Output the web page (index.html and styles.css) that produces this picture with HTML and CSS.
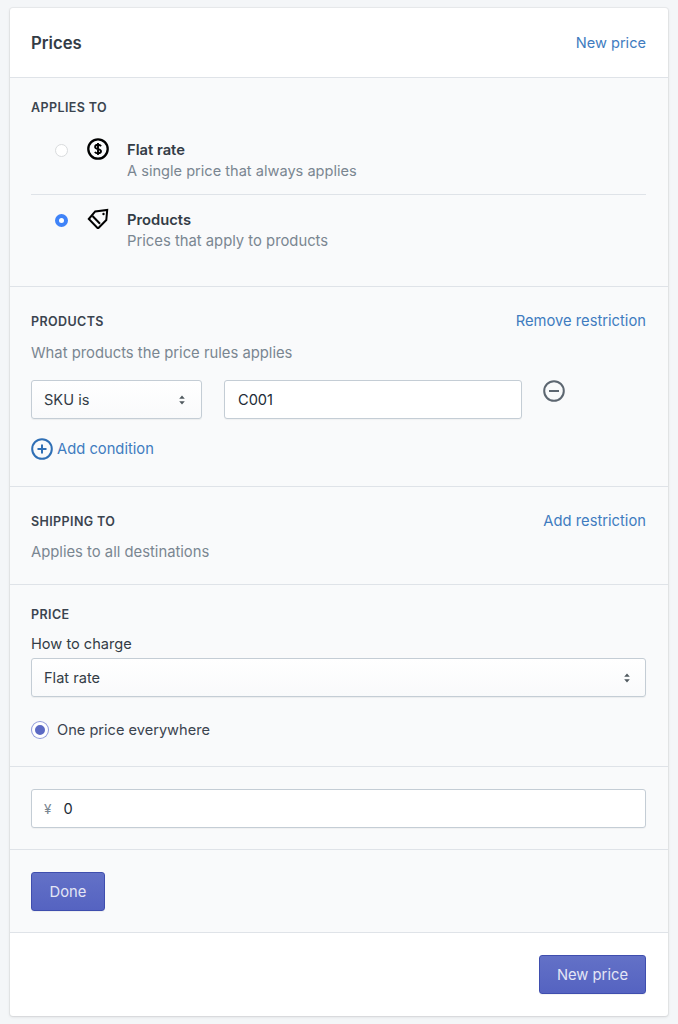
FILE: index.html
```html
<!DOCTYPE html>
<html lang="en">
<head>
<meta charset="utf-8">
<title>Prices</title>
<link rel="stylesheet" href="styles.css">
</head>
<body>
<main class="card">
  <header class="card-head">
    <h2 class="card-title">Prices</h2>
    <a class="link" href="#">New price</a>
  </header>

  <section class="sec sec-applies">
    <h3 class="label">Applies to</h3>
    <div class="option option-first">
      <span class="radio-plain"></span>
      <svg class="opt-icon" viewBox="0 0 22 22" width="22" height="22" fill="none" stroke="#000" stroke-width="2.300">
        <circle cx="11" cy="11" r="9.700"/>
        <path d="M14 8.200c-.5-.9-1.500-1.400-3-1.400-1.700 0-2.900.8-2.900 2.100 0 2.900 5.900 1.400 5.900 4.300 0 1.300-1.200 2.100-3 2.100-1.600 0-2.600-.5-3.100-1.400M11 5v12" stroke-width="1.900"/>
      </svg>
      <div class="opt-text">
        <div class="opt-title">Flat rate</div>
        <div class="muted">A single price that always applies</div>
      </div>
    </div>
    <div class="option">
      <span class="radio-blue"></span>
      <svg class="opt-icon" viewBox="0 0 22 22" width="22" height="22" fill="none" stroke="#000" stroke-width="2" stroke-linejoin="miter">
        <path d="M1.800 12 8.200 4.400l12-1.400-.9 10L11 21.500z"/>
        <path d="M5.500 9 13 16.800"/>
        <circle cx="16.500" cy="7" r="1.200" fill="#000" stroke="none"/>
      </svg>
      <div class="opt-text">
        <div class="opt-title">Products</div>
        <div class="muted muted-wide">Prices that apply to products</div>
      </div>
    </div>
  </section>

  <section class="sec sec-products">
    <div class="sec-head">
      <h3 class="label">Products</h3>
      <a class="link" href="#">Remove restriction</a>
    </div>
    <p class="muted muted-wide sec-note sec-note-low">What products the price rules applies</p>
    <div class="condition">
      <div class="select select-sku">
        <span>SKU is</span>
        <svg class="caret" viewBox="0 0 8 12" width="8" height="12" fill="#50595f"><path d="M4 1.500 6.800 4.800H1.200zM4 10.500 1.200 7.200h5.600z"/></svg>
      </div>
      <div class="input input-sku">C001</div>
      <svg class="minus" viewBox="0 0 22 22" width="22" height="22" fill="none" stroke="#5c6670" stroke-width="2">
        <circle cx="11" cy="11" r="9.800"/>
        <path d="M6 11h10"/>
      </svg>
    </div>
    <a class="add" href="#">
      <svg viewBox="0 0 22 22" width="22" height="22" fill="none" stroke="#2f6fb5" stroke-width="2">
        <circle cx="11" cy="11" r="9.800"/>
        <path d="M11 6.500v9M6.500 11h9"/>
      </svg>
      <span>Add condition</span>
    </a>
  </section>

  <section class="sec sec-shipping">
    <div class="sec-head">
      <h3 class="label">Shipping to</h3>
      <a class="link" href="#">Add restriction</a>
    </div>
    <p class="muted muted-wide sec-note">Applies to all destinations</p>
  </section>

  <section class="sec sec-price">
    <h3 class="label">Price</h3>
    <div class="field-label">How to charge</div>
    <div class="select">
      <span>Flat rate</span>
      <svg class="caret" viewBox="0 0 8 12" width="8" height="12" fill="#50595f"><path d="M4 1.500 6.800 4.800H1.200zM4 10.500 1.200 7.200h5.600z"/></svg>
    </div>
    <div class="radio-row">
      <span class="radio-indigo"></span>
      <span>One price everywhere</span>
    </div>
  </section>

  <section class="sec sec-amount">
    <div class="input input-money"><span class="currency">¥</span><span>0</span></div>
  </section>

  <section class="sec sec-done">
    <button class="btn" type="button">Done</button>
  </section>

  <footer class="card-foot">
    <button class="btn" type="button">New price</button>
  </footer>
</main>
</body>
</html>
```

FILE: styles.css
```css
* { box-sizing: border-box; }
html, body { margin: 0; padding: 0; }
body {
  background: #f4f6f8;
  padding: 8px 10px;
  font-family: Inter, "Liberation Sans", sans-serif;
  font-size: 14.6px;
  line-height: 20px;
  color: #212b36;
  height: 1024px;
  overflow: hidden;
}
.card {
  height: 1008px;
  background: #fff;
  border-radius: 3px;
  box-shadow: 0 0 0 1px rgba(63,63,68,.05), 0 1px 3px rgba(63,63,68,.15);
  display: flex;
  flex-direction: column;
}
.card-head {
  height: 70px;
  flex: none;
  padding: 0 22px 0 21px;
  display: flex;
  align-items: center;
  justify-content: space-between;
  border-bottom: 1px solid #dfe3e8;
}
.card-title { margin: 0; font-size: 16.700px; font-weight: 600; color: #333c46; }
.link { color: #3f7cc0; text-decoration: none; font-size: 14.750px; }
.card-head .link { font-size: 14.600px; }
.sec {
  flex: none;
  background: #f9fafb;
  padding: 0 22px 0 21px;
  border-bottom: 1px solid #dfe3e8;
}
.label {
  margin: 0;
  font-size: 12.500px;
  line-height: 16px;
  font-weight: 600;
  letter-spacing: .4px;
  text-transform: uppercase;
  color: #3b444f;
}
.muted { color: #7a8691; }
.muted-wide { font-size: 14.800px; }
.sec-applies { height: 209px; padding-top: 22px; }
.option {
  display: flex;
  align-items: flex-start;
  padding: 14px 0 0 24px;
}
.option-first { height: 79px; border-bottom: 1px solid #dfe3e8; padding-top: 24px; }
.option-first .opt-text { margin-top: -1px; }
.radio-plain, .radio-blue {
  width: 13px;
  height: 13px;
  border-radius: 50%;
  flex: none;
}
.radio-plain { background: #fff; border: 1px solid #d9dbdd; margin-top: 4px; }
.radio-blue { background: #fff; border: 4px solid #3f83f8; margin-top: 5px; }
.opt-icon { flex: none; margin: -2px 18px 0 19px; }
.opt-title { font-weight: 600; font-size: 14.750px; line-height: 22px; color: #333c46; }
.sec-products { height: 200px; padding-top: 24px; }
.sec-head { display: flex; justify-content: space-between; align-items: flex-start; }
.sec-head .label { margin-top: 3px; }
.sec-note { margin: 11px 0 0; }
.sec-note-low { margin-top: 12px; }
.condition { display: flex; align-items: flex-start; margin-top: 17px; }
.select, .input {
  height: 39px;
  border: 1px solid #c4cdd5;
  border-radius: 3px;
  display: flex;
  align-items: center;
  padding: 0 12px;
}
.select {
  justify-content: space-between;
  background: linear-gradient(#fff, #f9fafb);
  box-shadow: 0 1px 1px rgba(22,29,37,.06);
  color: #333c46;
  padding-right: 14px;
}
.input { background: #fff; box-shadow: 0 1px 1px rgba(22,29,37,.04); color: #212b36; }
.select-sku { width: 171px; flex: none; padding-right: 15px; }
.input-sku { width: 297.500px; flex: none; margin-left: 22px; padding-left: 13px; }
.minus { flex: none; margin-left: 21.500px; }
.add {
  display: flex;
  align-items: center;
  gap: 4px;
  margin-top: 19px;
  color: #3f7cc0;
  text-decoration: none;
  font-size: 14.750px;
}
.sec-shipping { height: 98px; padding-top: 24px; }
.sec-price { height: 182px; padding-top: 22px; }
.field-label { margin-top: 11px; height: 24px; color: #333c46; }
.radio-row { display: flex; align-items: center; gap: 9px; margin-top: 23px; color: #3b444f; }
.radio-indigo {
  width: 16px;
  height: 16px;
  border-radius: 50%;
  background: #5c6ac4;
  border: 3px solid #fff;
  box-shadow: 0 0 0 1px #8f99da;
  margin-left: 1px;
  flex: none;
}
.sec-amount { height: 83px; padding-top: 22px; }
.input-money { gap: 12px; }
.currency { color: #7a8691; font-size: 13.500px; }
.sec-done { height: 83px; padding-top: 22px; }
.btn {
  height: 39px;
  padding: 0 17.500px;
  border: 1px solid #3f4eae;
  border-radius: 3px;
  background: linear-gradient(#6371c7, #5563c1);
  color: #e3e5f5;
  font: inherit;
  font-size: 14.750px;
  box-shadow: 0 1px 0 rgba(22,29,37,.05);
}
.card-foot {
  flex: 1;
  padding: 22px 22px 0;
  display: flex;
  justify-content: flex-end;
  align-items: flex-start;
}
.card-foot .btn { padding: 0 17px; }
```
